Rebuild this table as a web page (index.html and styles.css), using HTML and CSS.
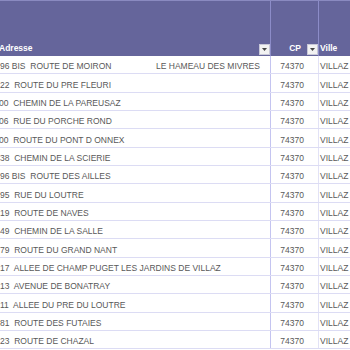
FILE: index.html
```html
<!DOCTYPE html>
<html lang="fr">
<head>
    <meta charset="UTF-8">
    <title>Adresses</title>
    <link rel="stylesheet" href="styles.css">
</head>
<body>
    <div class="sheet">
        <div class="head-row">
            <div class="hcell col-addr">
                <span class="hlabel">Adresse</span>
                <span class="filter-btn"><svg width="5" height="3" viewBox="0 0 5 3"><path d="M0 0h5L2.5 3z" fill="#444"/></svg></span>
            </div>
            <div class="hcell col-cp">
                <span class="hlabel">CP</span>
                <span class="filter-btn"><svg width="5" height="3" viewBox="0 0 5 3"><path d="M0 0h5L2.5 3z" fill="#444"/></svg></span>
            </div>
            <div class="hcell col-ville">
                <span class="hlabel">Ville</span>
            </div>
        </div>

        <div class="row">
            <div class="cell col-addr"><span class="addr-main">96 BIS&nbsp; ROUTE DE MOIRON</span>LE HAMEAU DES MIVRES</div>
            <div class="cell col-cp">74370</div>
            <div class="cell col-ville">VILLAZ</div>
        </div>
        <div class="row">
            <div class="cell col-addr">22&nbsp; ROUTE DU PRE FLEURI</div>
            <div class="cell col-cp">74370</div>
            <div class="cell col-ville">VILLAZ</div>
        </div>
        <div class="row">
            <div class="cell col-addr cut">00&nbsp; CHEMIN DE LA PAREUSAZ</div>
            <div class="cell col-cp">74370</div>
            <div class="cell col-ville">VILLAZ</div>
        </div>
        <div class="row">
            <div class="cell col-addr cut">06&nbsp; RUE DU PORCHE ROND</div>
            <div class="cell col-cp">74370</div>
            <div class="cell col-ville">VILLAZ</div>
        </div>
        <div class="row">
            <div class="cell col-addr cut">00&nbsp; ROUTE DU PONT D ONNEX</div>
            <div class="cell col-cp">74370</div>
            <div class="cell col-ville">VILLAZ</div>
        </div>
        <div class="row">
            <div class="cell col-addr">38&nbsp; CHEMIN DE LA SCIERIE</div>
            <div class="cell col-cp">74370</div>
            <div class="cell col-ville">VILLAZ</div>
        </div>
        <div class="row">
            <div class="cell col-addr">96 BIS&nbsp; ROUTE DES AILLES</div>
            <div class="cell col-cp">74370</div>
            <div class="cell col-ville">VILLAZ</div>
        </div>
        <div class="row">
            <div class="cell col-addr">95&nbsp; RUE DU LOUTRE</div>
            <div class="cell col-cp">74370</div>
            <div class="cell col-ville">VILLAZ</div>
        </div>
        <div class="row">
            <div class="cell col-addr">19&nbsp; ROUTE DE NAVES</div>
            <div class="cell col-cp">74370</div>
            <div class="cell col-ville">VILLAZ</div>
        </div>
        <div class="row">
            <div class="cell col-addr">49&nbsp; CHEMIN DE LA SALLE</div>
            <div class="cell col-cp">74370</div>
            <div class="cell col-ville">VILLAZ</div>
        </div>
        <div class="row">
            <div class="cell col-addr">79&nbsp; ROUTE DU GRAND NANT</div>
            <div class="cell col-cp">74370</div>
            <div class="cell col-ville">VILLAZ</div>
        </div>
        <div class="row">
            <div class="cell col-addr">17&nbsp; ALLEE DE CHAMP PUGET LES JARDINS DE VILLAZ</div>
            <div class="cell col-cp">74370</div>
            <div class="cell col-ville">VILLAZ</div>
        </div>
        <div class="row">
            <div class="cell col-addr">13&nbsp; AVENUE DE BONATRAY</div>
            <div class="cell col-cp">74370</div>
            <div class="cell col-ville">VILLAZ</div>
        </div>
        <div class="row">
            <div class="cell col-addr">11&nbsp; ALLEE DU PRE DU LOUTRE</div>
            <div class="cell col-cp">74370</div>
            <div class="cell col-ville">VILLAZ</div>
        </div>
        <div class="row">
            <div class="cell col-addr">81&nbsp; ROUTE DES FUTAIES</div>
            <div class="cell col-cp">74370</div>
            <div class="cell col-ville">VILLAZ</div>
        </div>
        <div class="row">
            <div class="cell col-addr">23&nbsp; ROUTE DE CHAZAL</div>
            <div class="cell col-cp">74370</div>
            <div class="cell col-ville">VILLAZ</div>
        </div>
    </div>
</body>
</html>
```

FILE: styles.css
```css
html,
body {
    margin: 0;
    padding: 0;
    background-color: #ffffff;
    overflow: hidden;
}

.sheet {
    width: 350px;
    height: 350px;
    overflow: hidden;
    font-family: 'Liberation Sans', Arial, sans-serif;
    font-size: 8.5px;
    color: #585858;
}

.head-row,
.row {
    display: grid;
    grid-template-columns: 271px 48px 31px;
}

.head-row {
    height: 56px;
    background-color: #65659b;
    border-top: 1px solid #8a8ac0;
    box-sizing: border-box;
}

.hcell {
    display: flex;
    align-items: flex-end;
    padding-bottom: 2px;
    color: #ffffff;
    font-weight: bold;
    border-right: 1px solid #8c8cc8;
    box-sizing: border-box;
    overflow: hidden;
}

.hcell.col-addr {
    justify-content: space-between;
    padding-left: 0;
    text-indent: -1px;
}

.hcell.col-cp {
    justify-content: flex-end;
    gap: 6px;
    padding-right: 0;
}

.hcell.col-ville {
    border-right: none;
    padding-left: 1px;
}

.hlabel {
    line-height: 10px;
    margin-bottom: 1px;
}

.filter-btn {
    width: 11px;
    height: 11px;
    flex-shrink: 0;
    display: flex;
    align-items: center;
    justify-content: center;
    background-color: #f2f2f2;
    border: 1px solid #c8c8d8;
    box-sizing: border-box;
    margin-bottom: -1px;
}

.row {
    height: 18.33px;
    border-bottom: 1px solid #dcdcf4;
    box-sizing: border-box;
}

.cell {
    display: flex;
    align-items: flex-end;
    padding-bottom: 2px;
    line-height: 9px;
    white-space: pre;
    overflow: hidden;
    box-sizing: border-box;
}

.cell.col-addr {
    border-right: 1px solid #c4c4f0;
}

.cell.cut {
    text-indent: -1px;
}

.cell.col-cp {
    justify-content: flex-end;
    padding-right: 14px;
    border-right: 1px solid #e2e2f6;
}

.cell.col-ville {
    padding-left: 1px;
}

.addr-main {
    display: inline-block;
    width: 156px;
}
```
